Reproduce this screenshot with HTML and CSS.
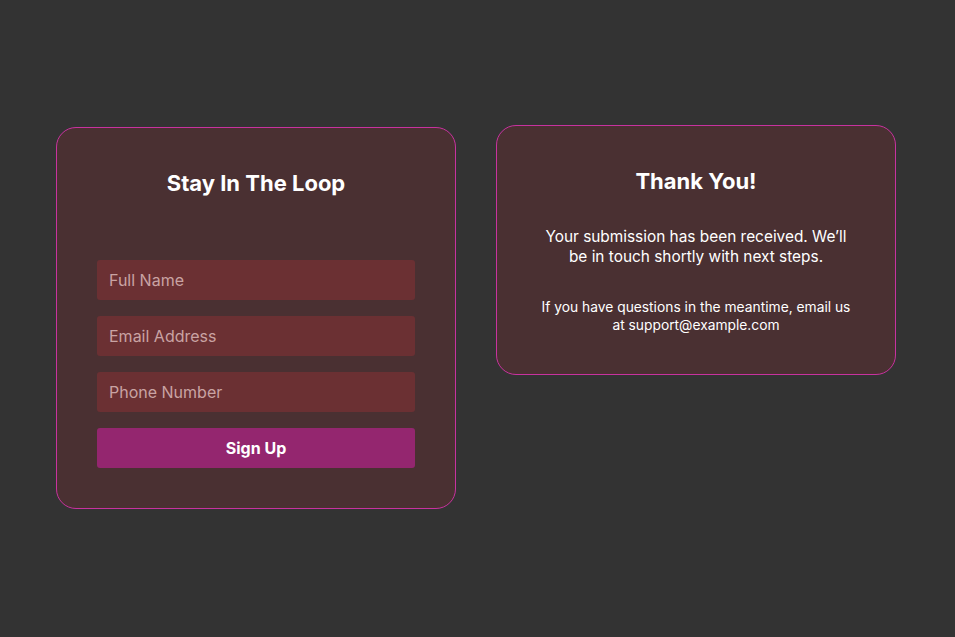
FILE: index.html
```html
<!DOCTYPE html>
<html lang="en">
<head>
<meta charset="utf-8">
<title>Stay In The Loop</title>
<link rel="stylesheet" href="styles.css">
</head>
<body>
<main class="page">
  <section class="card signup">
    <h1 class="card-title">Stay In The Loop</h1>
    <form class="form">
      <input class="field" type="text" placeholder="Full Name">
      <input class="field" type="email" placeholder="Email Address">
      <input class="field" type="tel" placeholder="Phone Number">
      <button class="submit" type="button">Sign Up</button>
    </form>
  </section>
  <section class="card thanks">
    <h2 class="card-title">Thank You!</h2>
    <p class="lead">Your submission has been received. We’ll be in touch shortly with next steps.</p>
    <p class="note">If you have questions in the meantime, email us at support@example.com</p>
  </section>
</main>
</body>
</html>
```

FILE: styles.css
```css
* { box-sizing: border-box; }
html, body { margin: 0; padding: 0; }
body {
  background: #333333;
  font-family: Inter, "Noto Sans", "Liberation Sans", sans-serif;
  color: #ffffff;
  width: 955px;
  height: 637px;
}
.page {
  display: flex;
  justify-content: center;
  align-items: flex-start;
  gap: 40px;
  padding-top: 125px;
  padding-right: 3px;
}
.card {
  width: 400px;
  background: #4a3032;
  border: 1px solid #c8329f;
  border-radius: 20px;
  padding: 40px;
}
.signup { margin-top: 2px; }
.card-title {
  margin: 0;
  font-size: 22px;
  line-height: 30px;
  font-weight: 700;
  text-align: center;
  color: #ffffff;
}
.form {
  display: flex;
  flex-direction: column;
  gap: 16px;
  margin-top: 62px;
}
.field {
  height: 40px;
  border: none;
  border-radius: 3px;
  background: #6b3033;
  padding: 0 12px;
  font-family: inherit;
  font-size: 16px;
  color: #fff;
  outline: none;
}
.field::placeholder { color: #c9a3a3; }
.submit {
  height: 40px;
  border: none;
  border-radius: 3px;
  background: #94266f;
  color: #fff;
  font-family: inherit;
  font-size: 16px;
  font-weight: 700;
}
.thanks { text-align: center; }
.lead {
  margin: 31px 0 0;
  font-size: 15.4px;
  line-height: 20px;
}
.note {
  margin: 31px 0 0;
  font-size: 13.8px;
  line-height: 18px;
}
```
